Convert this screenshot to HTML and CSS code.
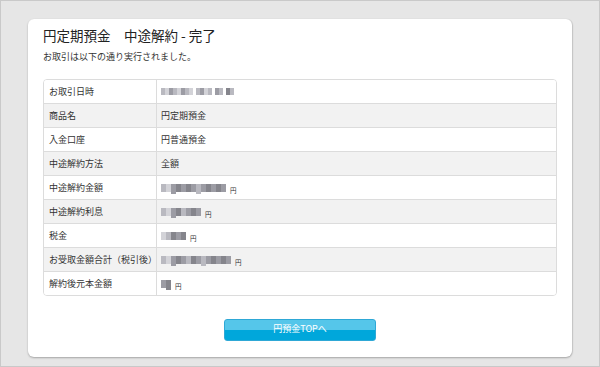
FILE: index.html
```html
<!DOCTYPE html>
<html lang="ja">
<head>
<meta charset="utf-8">
<link rel="stylesheet" href="styles.css">
</head>
<body>
<div class="frame">
  <div class="card">
    <h1 class="title">円定期預金　中途解約 - 完了</h1>
    <p class="lead">お取引は以下の通り実行されました。</p>
    <div class="tbl">
      <div class="row"><div class="th">お取引日時</div><div class="td"><span class="blur"><i class="c2"></i><i class="c1"></i><i class="c3"></i><i class="c2"></i><i class="c1"></i><i class="c3"></i><i class="c2"></i><i class="c1"></i><i class="gap"></i><i class="c2"></i><i class="c3"></i><i class="c1"></i><i class="c2"></i><i class="gap"></i><i class="c3"></i><i class="c2"></i><i class="gap"></i><i class="c4"></i><i class="c2"></i></span></div></div>
      <div class="row alt"><div class="th">商品名</div><div class="td">円定期預金</div></div>
      <div class="row"><div class="th">入金口座</div><div class="td">円普通預金</div></div>
      <div class="row alt"><div class="th">中途解約方法</div><div class="td">全額</div></div>
      <div class="row"><div class="th">中途解約金額</div><div class="td"><span class="blur big"><i class="c2"></i><i class="c1"></i><i class="c3 dn"></i><i class="c4"></i><i class="c3"></i><i class="c4"></i><i class="c3"></i><i class="c2 dn"></i><i class="c3"></i><i class="c4"></i><i class="c3"></i><i class="c4"></i><i class="c3"></i></span><span class="yen">円</span></div></div>
      <div class="row alt"><div class="th">中途解約利息</div><div class="td"><span class="blur big"><i class="c2"></i><i class="c1"></i><i class="c3 dn"></i><i class="c4"></i><i class="c2"></i><i class="c3"></i><i class="c4"></i><i class="c3"></i></span><span class="yen">円</span></div></div>
      <div class="row"><div class="th">税金</div><div class="td"><span class="blur big"><i class="c1"></i><i class="c2"></i><i class="c4"></i><i class="c3"></i><i class="c4"></i></span><span class="yen">円</span></div></div>
      <div class="row alt"><div class="th">お受取金額合計（税引後）</div><div class="td"><span class="blur big"><i class="c2"></i><i class="c1"></i><i class="c3 dn"></i><i class="c4"></i><i class="c3"></i><i class="c2"></i><i class="c4"></i><i class="c3"></i><i class="c2 dn"></i><i class="c3"></i><i class="c4"></i><i class="c3"></i><i class="c4"></i><i class="c3"></i></span><span class="yen">円</span></div></div>
      <div class="row"><div class="th">解約後元本金額</div><div class="td"><span class="blur big"><i class="c3"></i><i class="c4 dn"></i></span><span class="yen">円</span></div></div>
    </div>
    <div class="actions">
      <a class="btn" href="#">円預金TOPへ</a>
    </div>
  </div>
</div>
</body>
</html>
```

FILE: styles.css
```css
html, body {
  margin: 0;
  padding: 0;
}
body {
  width: 600px;
  height: 367px;
  font-family: "Noto Sans CJK JP", "Noto Sans", sans-serif;
  color: #333;
}
.frame {
  box-sizing: border-box;
  width: 600px;
  height: 367px;
  background: #e6e6e6;
  border: 1px solid #c9c9c9;
  padding: 18px 27px 0 27px;
}
.card {
  background: #fff;
  border-radius: 6px;
  box-shadow: 0 1px 2px rgba(0, 0, 0, 0.28), 1px 0 1px rgba(0, 0, 0, 0.08);
  height: 338px;
  box-sizing: border-box;
  padding: 8px 15px 0 15px;
}
.title {
  margin: 0;
  font-size: 13.5px;
  font-weight: normal;
  line-height: 16px;
  color: #222;
}
.lead {
  margin: 8px 0 0 0;
  font-size: 9px;
  line-height: 12px;
  color: #333;
}
.tbl {
  margin-top: 16px;
  border: 1px solid #dcdcdc;
  border-radius: 4px;
  overflow: hidden;
}
.row {
  display: flex;
  height: 23px;
  border-top: 1px solid #dcdcdc;
  background: #fff;
}
.row:first-child {
  border-top: none;
}
.row.alt {
  background: #f2f2f2;
}
.th {
  width: 107px;
  flex: none;
  padding-left: 5px;
  border-right: 1px solid #dcdcdc;
  font-size: 9px;
  line-height: 23px;
  white-space: nowrap;
}
.td {
  flex: 1;
  padding-left: 4px;
  font-size: 9px;
  line-height: 23px;
  display: flex;
  align-items: center;
}
.blur {
  display: inline-flex;
  align-items: flex-start;
  height: 8px;
}
.blur i {
  display: block;
  width: 4px;
  height: 7px;
}
.blur.big i {
  width: 5px;
  height: 8px;
}
.blur i.dn {
  height: 10px;
}
.blur i.gap {
  background: transparent;
  width: 3px;
}
.c1 { background: #d3d3d8; }
.c2 { background: #b9b9c0; }
.c3 { background: #9c9ca4; }
.c4 { background: #85858c; }
.yen {
  font-size: 6.5px;
  margin-left: 4px;
  margin-top: 4px;
  line-height: 8px;
}
.actions {
  display: flex;
  justify-content: center;
  margin-top: 23px;
}
.btn {
  display: block;
  box-sizing: border-box;
  width: 152px;
  height: 22px;
  border: 1px solid #2ea8d6;
  border-radius: 3px;
  background: linear-gradient(to bottom, #55c6ea 0%, #55c6ea 50%, #00a7db 50%, #00a7db 100%);
  color: #fff;
  font-size: 9px;
  line-height: 18px;
  text-align: center;
  text-decoration: none;
}
```
